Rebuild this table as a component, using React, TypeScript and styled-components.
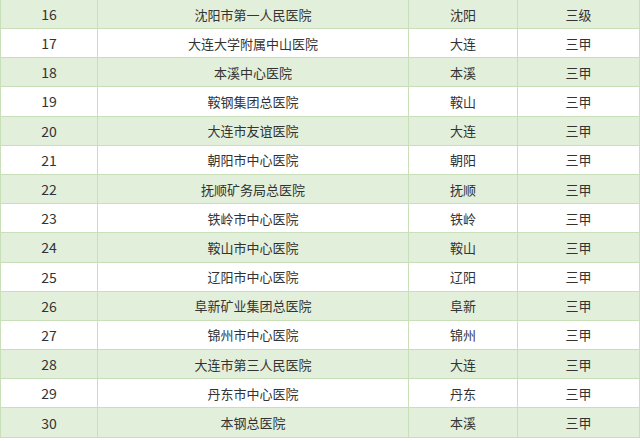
import React from "react";
import styled, { createGlobalStyle } from "styled-components";

const GlobalStyle = createGlobalStyle`
  html, body {
    margin: 0;
    padding: 0;
    background: #ffffff;
  }
  body {
    font-family: "Noto Sans CJK SC", "Noto Sans", sans-serif;
  }
`;

const Table = styled.div`
  width: 640px;
  height: 441px;
  overflow: hidden;
  display: flex;
  flex-direction: column;
  color: #333333;
  font-size: 13px;
`;

const Row = styled.div<{ $green: boolean; $first: boolean }>`
  display: grid;
  grid-template-columns: 97px 311px 109px 1fr;
  height: ${(p) => (p.$first ? "29px" : "29.2px")};
  flex-shrink: 0;
  box-sizing: border-box;
  border-left: 1px solid #c9dfba;
  border-bottom: 1px solid #c9dfba;
  background: ${(p) => (p.$green ? "#e2efda" : "#ffffff")};
`;

const Cell = styled.div<{ $num?: boolean }>`
  display: flex;
  align-items: center;
  justify-content: center;
  box-sizing: border-box;
  border-right: 1px solid #c9dfba;
  font-size: ${(p) => (p.$num ? "14px" : "13px")};
  line-height: 1;
  white-space: nowrap;
`;

const rows = [
  [16, "沈阳市第一人民医院", "沈阳", "三级"],
  [17, "大连大学附属中山医院", "大连", "三甲"],
  [18, "本溪中心医院", "本溪", "三甲"],
  [19, "鞍钢集团总医院", "鞍山", "三甲"],
  [20, "大连市友谊医院", "大连", "三甲"],
  [21, "朝阳市中心医院", "朝阳", "三甲"],
  [22, "抚顺矿务局总医院", "抚顺", "三甲"],
  [23, "铁岭市中心医院", "铁岭", "三甲"],
  [24, "鞍山市中心医院", "鞍山", "三甲"],
  [25, "辽阳市中心医院", "辽阳", "三甲"],
  [26, "阜新矿业集团总医院", "阜新", "三甲"],
  [27, "锦州市中心医院", "锦州", "三甲"],
  [28, "大连市第三人民医院", "大连", "三甲"],
  [29, "丹东市中心医院", "丹东", "三甲"],
  [30, "本钢总医院", "本溪", "三甲"],
];

export default function App() {
  return (
    <>
      <GlobalStyle />
      <Table>
        {rows.map(([no, name, city, level], i) => (
          <Row key={no} $green={i % 2 === 0} $first={i === 0}>
            <Cell $num>{no}</Cell>
            <Cell>{name}</Cell>
            <Cell>{city}</Cell>
            <Cell>{level}</Cell>
          </Row>
        ))}
      </Table>
    </>
  );
}
